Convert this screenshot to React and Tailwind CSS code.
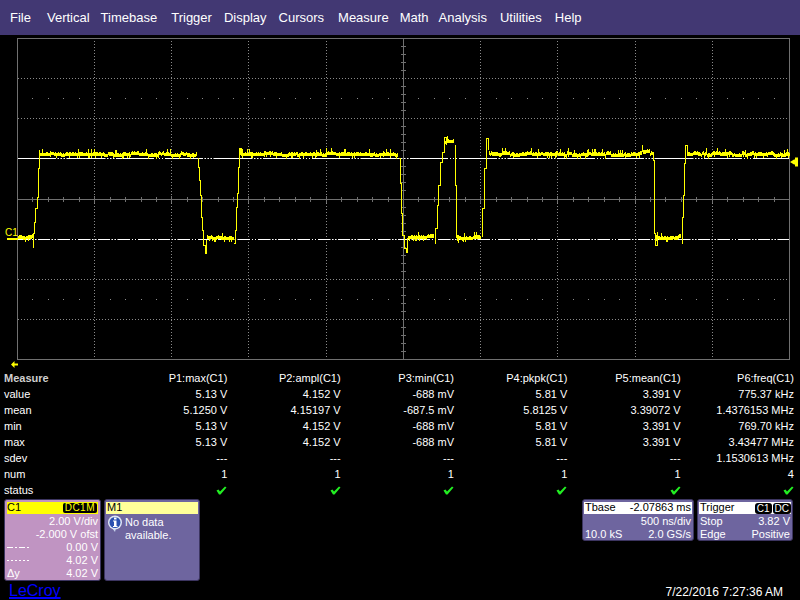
import React from "react";

const font = { fontFamily: '"Liberation Sans", Arial, sans-serif' };

const menu = [
  ["File", "ml-[10px]"],
  ["Vertical", "ml-[16px]"],
  ["Timebase", "ml-[11px]"],
  ["Trigger", "ml-[14px]"],
  ["Display", "ml-[12px]"],
  ["Cursors", "ml-[12px]"],
  ["Measure", "ml-[14px]"],
  ["Math", "ml-[11px]"],
  ["Analysis", "ml-[10px]"],
  ["Utilities", "ml-[13px]"],
  ["Help", "ml-[13px]"],
];

const rows = [
  ["Measure", "P1:max(C1)", "P2:ampl(C1)", "P3:min(C1)", "P4:pkpk(C1)", "P5:mean(C1)", "P6:freq(C1)"],
  ["value", "5.13 V", "4.152 V", "-688 mV", "5.81 V", "3.391 V", "775.37 kHz"],
  ["mean", "5.1250 V", "4.15197 V", "-687.5 mV", "5.8125 V", "3.39072 V", "1.4376153 MHz"],
  ["min", "5.13 V", "4.152 V", "-688 mV", "5.81 V", "3.391 V", "769.70 kHz"],
  ["max", "5.13 V", "4.152 V", "-688 mV", "5.81 V", "3.391 V", "3.43477 MHz"],
  ["sdev", "---", "---", "---", "---", "---", "1.1530613 MHz"],
  ["num", "1", "1", "1", "1", "1", "4"],
];

const vx = [94, 171, 248, 326, 403, 480, 557, 635, 712];
const hy = [78, 118, 158, 199, 239, 279, 319];
const minor = [];
for (let i = 0; i < 50; i++) {
  const x = 17 + (i * 772) / 50;
  if (i % 5 !== 0) minor.push(Math.round(x) + 0.5);
}
const minorY = [];
for (let i = 0; i < 40; i++) {
  const y = 38 + (i * 321) / 40;
  if (i % 5 !== 0) minorY.push(Math.round(y) + 0.5);
}

let seed = 12345;
const rnd = () => {
  seed = (seed * 1103515245 + 12345) & 0x7fffffff;
  return seed / 0x7fffffff;
};

function band(x0, x1, base) {
  let d = "";
  let wob = 0;
  for (let x = x0; x <= x1; x++) {
    const b = typeof base === "function" ? base(x) : base;
    wob = rnd() > 0.7 ? Math.round(rnd() * 2) - 1 : wob;
    const r = rnd();
    const up = r > 0.92 ? 6 : r > 0.5 ? 3 : 2;
    const dn = rnd() > 0.88 ? 3 : 1;
    d += `M${x + 0.5} ${b + wob - up}V${b + wob + dn}`;
  }
  return d;
}

function steps(pts) {
  let d = `M${pts[0][0] + 0.5} ${pts[0][1]}`;
  for (let i = 1; i < pts.length; i++) {
    d += `H${pts[i][0] + 0.5}V${pts[i][1]}`;
  }
  return d;
}

const bands =
  band(18, 32, 238) +
  band(40, 196, 155) +
  band(207, 233, 238) +
  band(240, 397, 155) +
  band(408, 433, 238) +
  band(445, 453, 143) +
  band(457, 480, 239) +
  band(489, 652, (x) => (x > 641 && x < 650 ? 152 : 155)) +
  band(656, 680, 238) +
  band(687, 789, 155);

const edges = [
  [[32, 247], [33, 233], [34, 222], [35, 208], [37, 197], [38, 168], [39, 150]],
  [[197, 158], [198, 167], [199, 180], [200, 195], [201, 217], [202, 230], [203, 245], [205, 253], [206, 240]],
  [[233, 243], [235, 230], [236, 207], [237, 193], [238, 167], [239, 148], [241, 154]],
  [[398, 158], [400, 183], [401, 213], [402, 235], [404, 248], [406, 252], [407, 238]],
  [[434, 243], [435, 228], [437, 205], [438, 185], [440, 162], [442, 152], [444, 137], [446, 145]],
  [[454, 145], [455, 185], [456, 237], [458, 243]],
  [[481, 236], [482, 208], [484, 168], [486, 138], [488, 150]],
  [[650, 152], [653, 160], [654, 233], [655, 245], [657, 238]],
  [[681, 243], [682, 217], [683, 195], [684, 163], [685, 145], [687, 154]],
];

function Scope() {
  return (
    <svg className="block h-[335px] w-[800px]" viewBox="0 35 800 335" shapeRendering="crispEdges">
      {vx.filter((x) => x !== 403).map((x) => (
        <line key={x} x1={x + 0.5} x2={x + 0.5} y1="38" y2="359" stroke="#8a8a8a" strokeDasharray="1 2" />
      ))}
      {hy.filter((y) => y !== 199).map((y) => (
        <line key={y} x1="18" x2="789" y1={y + 0.5} y2={y + 0.5} stroke="#8a8a8a" strokeDasharray="1 2" />
      ))}
      {[98, 299].map((y) =>
        minor.map((x) => <rect key={`${x}-${y}`} x={x - 0.5} y={y} width="1" height="1" fill="#8a8a8a" />)
      )}
      <rect x="17.5" y="38.5" width="772" height="321" fill="none" stroke="#707070" />
      <line x1="18" x2="789" y1="199.5" y2="199.5" stroke="#707070" />
      <line x1="403.5" x2="403.5" y1="38" y2="359" stroke="#707070" />
      {minor.map((x) => (
        <line key={x} x1={x} x2={x} y1="197" y2="202" stroke="#707070" />
      ))}
      {minorY.map((y) => (
        <line key={y} x1="401" x2="406" y1={y} y2={y} stroke="#707070" />
      ))}
      {vx.map((x) => (
        <line key={x} x1={x + 0.5} x2={x + 0.5} y1="196" y2="203" stroke="#707070" />
      ))}
      <line x1="18" x2="789" y1="158.5" y2="158.5" stroke="#ffffff" strokeDasharray="38 2 1 2 1 2 1 2" />
      <line x1="18" x2="789" y1="239.5" y2="239.5" stroke="#ffffff" strokeDasharray="12 2 1 2 1 2" />
      <path d={bands} stroke="#ffff00" fill="none" />
      {edges.map((e, i) => (
        <path key={i} d={steps(e)} stroke="#ffff00" fill="none" />
      ))}
      <rect x="7" y="238" width="11" height="2" fill="#ffff00" />
      <text x="5" y="236" fontSize="10" fill="#ffff00" style={font} shapeRendering="auto">C1</text>
      <path d="M790 162L794 159.5H795V157.5H798V166.5H795V164.5H794Z" fill="#ffff00" shapeRendering="auto" />
      <path d="M11 364.5L14.5 361V363.5H18V365.5H14.5V368Z" fill="#ffff00" shapeRendering="auto" />
    </svg>
  );
}

function Check() {
  return (
    <svg width="11" height="9" viewBox="0 0 11 9" className="block">
      <path d="M0.5 4.5L2.5 3.5L4 5.5L9 0.5L10.5 1.5L4.5 8.5H3Z" fill="#22ee22" />
    </svg>
  );
}

function Table() {
  return (
    <div className="grid h-[128px] grid-cols-[110px_repeat(6,113.33px)] grid-rows-[repeat(8,16px)] pl-[4px] text-[11px] leading-[16px] text-white">
      {rows.map((r, i) =>
        r.map((c, j) => (
          <div
            key={`${i}-${j}`}
            className={j === 0 ? (i === 0 ? "font-bold text-[#cfcfcf]" : "") : "whitespace-nowrap text-right"}
          >
            {c}
          </div>
        ))
      )}
      <div>status</div>
      {[0, 1, 2, 3, 4, 5].map((i) => (
        <div key={i} className="flex items-center justify-end">
          <Check />
        </div>
      ))}
    </div>
  );
}

function InfoIcon() {
  return (
    <svg width="17" height="18" viewBox="0 0 17 18" className="shrink-0">
      <path d="M5 13L9 13L8 17Z" fill="#c8d4ee" />
      <circle cx="8" cy="7.5" r="7" fill="#dfe6f6" />
      <circle cx="8" cy="7.5" r="5.5" fill="#2a4fb0" />
      <rect x="7" y="2.5" width="2.5" height="2" fill="#ffffff" />
      <rect x="7" y="5.5" width="2.5" height="6" fill="#ffffff" />
      <rect x="6" y="5.5" width="1" height="1" fill="#ffffff" />
      <rect x="6" y="11" width="4.5" height="1" fill="#ffffff" />
    </svg>
  );
}

function Dash({ pattern }) {
  return (
    <svg width="22" height="3" viewBox="0 0 22 3" className="block" shapeRendering="crispEdges">
      <line x1="0" x2="22" y1="1.5" y2="1.5" stroke="#ffffff" strokeDasharray={pattern} />
    </svg>
  );
}

function PanelRow({ left, right }) {
  return (
    <div className="flex h-[13px] items-center justify-between whitespace-nowrap">
      <div>{left}</div>
      <div>{right}</div>
    </div>
  );
}

function Panels() {
  return (
    <div className="flex h-[82px] pl-[4px] pr-[7px] text-[11px] leading-[13px] text-white">
      <div className="w-[97px] rounded-[3px] border border-[#3c3560] bg-[#c094c2] px-[2px] pt-[2px]">
        <div className="flex h-[12px] items-center justify-between bg-[#ffff00] pb-[1px] pr-[1px] text-black">
          <span>C1</span>
          <span className="mt-[1px] rounded-[2px] bg-black px-[2px] text-[10px] leading-[10px] tracking-[0.5px] text-[#ffff00]">DC1M</span>
        </div>
        <div className="mt-[1px]">
          <div className="text-right">
            <div className="h-[13px]">2.00 V/div</div>
            <div className="h-[13px]">-2.000 V ofst</div>
          </div>
          <PanelRow left={<Dash pattern="6 2 2 2" />} right="0.00 V" />
          <PanelRow left={<Dash pattern="2 2" />} right="4.02 V" />
          <PanelRow left="Δy" right="4.02 V" />
        </div>
      </div>
      <div className="ml-[3px] w-[96px] rounded-[3px] border border-[#3c3560] bg-[#6e659f] px-[1px] pt-[2px]">
        <div className="flex h-[12px] items-center bg-[#ffff99] px-[1px] pb-[1px] text-black">M1</div>
        <div className="mt-[1px] flex gap-[1px] pl-[1px]">
          <InfoIcon />
          <div className="pt-[1px]">
            <div>No data</div>
            <div>available.</div>
          </div>
        </div>
      </div>
      <div className="ml-auto h-[42px] w-[112px] rounded-[3px] border border-[#3c3560] bg-[#6e659f] px-[1px] pt-[2px]">
        <div className="flex h-[12px] items-center justify-between bg-white px-[1px] pb-[1px] text-black">
          <span>Tbase</span>
          <span>-2.07863 ms</span>
        </div>
        <div className="mt-[1px] px-[1px]">
          <PanelRow left="" right="500 ns/div" />
          <PanelRow left="10.0 kS" right="2.0 GS/s" />
        </div>
      </div>
      <div className="ml-[3px] h-[42px] w-[96px] rounded-[3px] border border-[#3c3560] bg-[#6e659f] px-[1px] pt-[2px]">
        <div className="flex h-[12px] items-center justify-between bg-white pb-[1px] pl-[1px] text-black">
          <span>Trigger</span>
          <span className="mt-[1px] flex gap-[1px]">
            <span className="rounded-[3px] bg-black px-[2px] text-[10px] leading-[11px] text-white">C1</span>
            <span className="rounded-[3px] bg-black px-[2px] text-[10px] leading-[11px] text-white">DC</span>
          </span>
        </div>
        <div className="mt-[1px] px-[1px]">
          <PanelRow left="Stop" right="3.82 V" />
          <PanelRow left="Edge" right="Positive" />
        </div>
      </div>
    </div>
  );
}

export default function App() {
  return (
    <div className="h-[600px] w-[800px] overflow-hidden bg-black" style={font}>
      <div className="flex h-[35px] items-center bg-[#423873] text-[13px] text-white">
        {menu.map(([t, c]) => (
          <span key={t} className={c}>{t}</span>
        ))}
      </div>
      <Scope />
      <Table />
      <div className="h-[1px]" />
      <Panels />
      <div className="flex h-[19px] items-center justify-between pl-[9px] pr-[17px]">
        <span className="text-[16px] leading-[17px] text-[#0000ff] underline decoration-2 underline-offset-1 [text-decoration-skip-ink:none]">LeCroy</span>
        <span className="pt-[2px] text-[12px] leading-[14px] text-white">7/22/2016 7:27:36 AM</span>
      </div>
    </div>
  );
}
